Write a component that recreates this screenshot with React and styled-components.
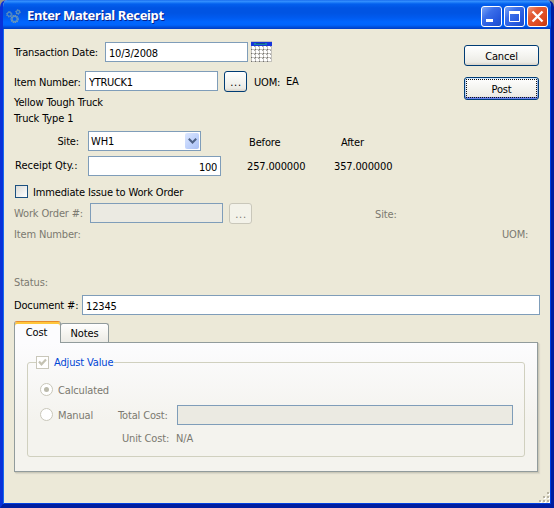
import React from "react";
import styled, { createGlobalStyle, css } from "styled-components";

const GlobalStyle = createGlobalStyle`
  * { box-sizing: border-box; }
  body { margin: 0; background: #9a9687; }
  button, input { font: inherit; letter-spacing: inherit; }
`;

const Window = styled.div`
  width: 554px;
  height: 508px;
  display: flex;
  flex-direction: column;
  border: 3px solid;
  border-color: #0054e3 #001ea0 #001ea0 #0831d9;
  border-top: 0;
  border-bottom-width: 4px;
  border-radius: 7px 7px 0 0;
  background: #ece9d8;
  overflow: hidden;
  font: 11px/14px "DejaVu Sans Condensed", "DejaVu Sans", sans-serif;
  letter-spacing: -0.15px;
  color: #000;
  white-space: nowrap;
`;

const TitleBar = styled.header`
  height: 29px;
  margin: 0 -3px;
  padding: 3px 6px 0 6px;
  flex: none;
  display: flex;
  align-items: center;
  background: linear-gradient(#0b5fe8 0, #3a93ff 1px, #2686fb 2px, #0360ee 4px, #0054e3 8px, #0054e3 13px, #005bf0 18px, #0066ff 22px, #0064fc 25px, #0050dc 27px, #003dc4 29px);
`;

const Title = styled.h1`
  flex: 1;
  margin: 0 0 2px 6px;
  font: bold 13px/18px "Noto Sans", sans-serif;
  letter-spacing: -0.38px;
  color: #fff;
  text-shadow: 1px 1px #06218c;
`;

const Controls = styled.div`
  display: flex;
  gap: 2px;
`;

const Control = styled.button`
  width: 21px;
  height: 21px;
  padding: 0;
  display: grid;
  place-items: center;
  border: 1px solid #fff;
  border-radius: 3px;
  background: ${(p) =>
    p.$close
      ? "linear-gradient(135deg, #f09a80 0, #e35c36 30%, #dd4a20 70%, #bf3510 100%)"
      : "linear-gradient(135deg, #7ba5f7 0, #3a6ee9 35%, #2659df 70%, #1c4cc8 100%)"};
`;

const Client = styled.main`
  flex: 1;
  padding: 13px 11px 0 11px;
  display: flex;
  flex-direction: column;
  box-shadow: inset 1px 0 #166aee, inset -1px 0 #0040e0, inset 0 -1px #0040e0;
`;

const Upper = styled.section`
  display: flex;
  justify-content: space-between;
  height: 141px;
  flex: none;
`;

const Actions = styled.div`
  display: flex;
  flex-direction: column;
  gap: 11px;
  padding-top: 3px;
  margin-right: 1px;
`;

const Row = styled.div`
  display: flex;
  flex: none;
  align-items: center;
  height: ${(p) => p.$h || 21}px;
  margin-top: ${(p) => p.$mt || 0}px;
  color: ${(p) => (p.$off ? "#7b7970" : "inherit")};
`;

const Label = styled.span`
  flex: none;
  align-self: flex-start;
  margin-top: ${(p) => (p.$y === undefined ? 4 : p.$y)}px;
  width: ${(p) => (p.$w ? p.$w + "px" : "auto")};
  margin-left: ${(p) => p.$ml || 0}px;
  letter-spacing: ${(p) => (p.$ls === undefined ? -0.15 : p.$ls)}px;
  text-align: ${(p) => (p.$end ? "right" : "left")};
`;

const Field = styled.input`
  width: ${(p) => p.$w}px;
  height: 20px;
  flex: none;
  margin: 0 0 1px;
  padding: 2px 3px 0 3px;
  border: 1px solid #7f9db9;
  border-radius: 0;
  background: #fff;
  color: #000;
  letter-spacing: ${(p) => (p.$ls === undefined ? -0.15 : p.$ls)}px;
  text-align: ${(p) => (p.$end ? "right" : "left")};
  outline: none;
  &:disabled { background: #ebeae2; }
`;

const PushButton = styled.button`
  width: ${(p) => p.$w}px;
  height: ${(p) => p.$h || 21}px;
  flex: none;
  margin: 0 0 0 ${(p) => p.$ml || 0}px;
  padding: ${(p) => (p.$default ? 0 : 2)}px 0 0;
  border: 1px solid #003c74;
  border-radius: 3px;
  background: linear-gradient(#fff, #f4f4f0 50%, #ecebe5 85%, #d9d3c8);
  color: #000;
  &:disabled { border-color: #c9c7ba; background: #f3f2e9; color: #7b7970; }
  ${(p) =>
    p.$default &&
    css`
      box-shadow: inset 0 1px #cee7ff, inset 0 -2px #6982ee, inset 1px 0 #bcd4f6, inset -1px 0 #98b4e8;
    `}
`;

const Focus = styled.span`
  display: block;
  margin: 1px;
  height: 19px;
  border: 1px dotted #111;
  line-height: 19px;
`;

const Dots = styled.span`
  display: block;
  padding-left: 1px;
  letter-spacing: 0.7px;
`;

const CalendarButton = styled.span`
  display: block;
  height: 21px;
  margin: -2px 0 0 3px;
`;

const Select = styled.div`
  width: 113px;
  height: 20px;
  margin-bottom: 1px;
  padding: 1px 1px 1px 2px;
  display: flex;
  justify-content: space-between;
  border: 1px solid #7f9db9;
  background: #fff;
  line-height: 18px;
`;

const Arrow = styled.span`
  width: 14px;
  height: 16px;
  display: grid;
  place-items: center;
  border-radius: 2px;
  background: linear-gradient(135deg, #dce7ff, #bdd0fb 60%, #a9bff4);
`;

const Check = styled.span`
  width: 13px;
  height: 13px;
  flex: none;
  display: grid;
  place-items: center;
  margin-left: ${(p) => p.$ml || 0}px;
  border: 1px solid ${(p) => (p.$off ? "#c9c7ba" : "#1c5180")};
  background: ${(p) => (p.$off ? "#fff" : "linear-gradient(135deg, #dcdcd7, #fff)")};
`;

const Radio = styled(Check)`
  margin-bottom: ${(p) => (p.$on ? 0 : 2)}px;
  border-radius: 50%;
  &::after {
    content: "";
    width: 5px;
    height: 5px;
    border-radius: 50%;
    background: ${(p) => (p.$on ? "#bbbaab" : "transparent")};
  }
`;

const Tabs = styled.nav`
  display: flex;
  align-items: flex-end;
  height: 21px;
  margin-top: 5px;
  flex: none;
`;

const Tab = styled.div`
  width: 49px;
  height: 19px;
  margin-left: -1px;
  padding-top: 3px;
  border: 1px solid #919b9c;
  border-bottom: 0;
  border-radius: 3px 3px 0 0;
  text-align: center;
  background: linear-gradient(#fff, #f4f3ee 60%, #ecebe6);
  ${(p) =>
    p.$active &&
    css`
      position: relative;
      z-index: 1;
      width: 47px;
      height: 22px;
      margin: 0 0 -1px;
      padding: 4px 2px 0 0;
      border-top-color: #e68b2c;
      box-shadow: inset 0 2px #ffc73c;
      background: #fcfcfe;
    `}
`;

const Pane = styled.section`
  width: 524px;
  height: 130px;
  flex: none;
  padding: 13px 12px 0 12px;
  border: 1px solid #919b9c;
  background: linear-gradient(#fcfcfe, #f4f3ee 60%);
  box-shadow: 1px 1px 1px #cbc8b8, 2px 2px 1px #deddcf;
`;

const Group = styled.fieldset`
  width: 498px;
  height: 101px;
  margin: 0;
  padding: 0 0 0 12px;
  border: 1px solid #d0d0bf;
  border-radius: 3px;
  color: #7b7970;
`;

const Legend = styled.legend`
  display: flex;
  align-items: center;
  height: 13px;
  margin-left: -4px;
  padding: 0 1px 0 0;
  color: #0046d5;
`;

const Grip = styled.svg`
  display: block;
  align-self: flex-end;
  margin: auto -10px 1px 0;
`;

const Logo = () => (
  <svg width="15" height="15" viewBox="0 0 15 15" fill="none">
    <g stroke="#7f9fae" strokeDasharray="1.3 .7">
      <circle cx="3.3" cy="5.3" r="2.6" />
      <circle cx="8.6" cy="10" r="3.500" strokeWidth="1.3" />
      <circle cx="12" cy="3" r="2.200" />
    </g>
    <g stroke="#5f93bd">
      <circle cx="3.3" cy="5.3" r="1.9" />
      <circle cx="8.6" cy="10" r="2.6" strokeWidth="1.3" />
      <circle cx="12" cy="3" r="1.5" />
    </g>
  </svg>
);

const Calendar = () => (
  <svg width="21" height="21" viewBox="0 0 21 21" shapeRendering="crispEdges">
    <rect width="21" height="21" fill="#c4c2bc" />
    <rect y="1" width="21" height="4" fill="#1635dc" />
    <rect x="3" y="2" width="13" height="2" fill="#1782a8" />
    <rect x="5" y="2" width="9" height="1" fill="#144b91" />
    {[5, 9, 13, 17].map((y) =>
      [1, 5, 9, 13, 17].map((x) => (
        <g key={`${x}-${y}`}>
          <rect x={x} y={y} width="3" height="3" fill="#fff" />
          <rect x={x - 1} y={y + 3} width="1" height="1" fill="#6f6f6f" />
          <rect x={x + 2} y={y} width="1" height="1" fill="#a5a5a5" />
        </g>
      ))
    )}
  </svg>
);

export default function App() {
  return (
    <>
      <GlobalStyle />
      <Window>
        <TitleBar>
          <Logo />
          <Title>Enter Material Receipt</Title>
          <Controls>
            <Control aria-label="Minimize">
              <svg width="19" height="19"><rect x="4" y="12" width="7" height="3" fill="#fff" /></svg>
            </Control>
            <Control aria-label="Maximize">
              <svg width="19" height="19"><path d="M4.5 5v9.500h10V5" stroke="#fff" fill="none" /><rect x="4" y="4" width="11" height="3" fill="#fff" /></svg>
            </Control>
            <Control $close aria-label="Close">
              <svg width="19" height="19"><path d="M4.500 4.500l10 10M14.500 4.500l-10 10" stroke="#fff" strokeWidth="2.3" /></svg>
            </Control>
          </Controls>
        </TitleBar>
        <Client>
          <Upper>
            <div>
              <Row>
                <Label $w={91}>Transaction Date:</Label>
                <Field $w={143} defaultValue="10/3/2008" $ls={-0.2} />
                <CalendarButton><Calendar /></CalendarButton>
              </Row>
              <Row $mt={8}>
                <Label $y={5} $w={71}>Item Number:</Label>
                <Field $w={133} defaultValue="YTRUCK1" $ls={-0.3} />
                <PushButton $w={23} $ml={6}><Dots>...</Dots></PushButton>
                <Label $y={5} $ml={7} $w={32}>UOM:</Label>
                <Label>EA</Label>
              </Row>
              <Row $h={16} $mt={3}><Label $y={1}>Yellow Tough Truck</Label></Row>
              <Row $h={16}><Label $y={1}>Truck Type 1</Label></Row>
              <Row $mt={4}>
                <Label $w={65} $end>Site:</Label>
                <Label $w={9} />
                <Select>WH1<Arrow><svg width="9" height="6"><path d="M.8 .8l3.700 3.700L8.200 .8" fill="none" stroke="#4d6185" strokeWidth="2" /></svg></Arrow></Select>
                <Label $y={5} $ml={48} $w={92}>Before</Label>
                <Label $y={5}>After</Label>
              </Row>
              <Row $mt={4}>
                <Label $y={3} $ml={1} $w={73} $ls={0}>Receipt Qty.:</Label>
                <Field $w={133} $end defaultValue="100" $ls={-0.3} />
                <Label $ml={26} $w={87}>257.000000</Label>
                <Label>357.000000</Label>
              </Row>
            </div>
            <Actions>
              <PushButton $w={75}>Cancel</PushButton>
              <PushButton $w={75} $h={23} $default><Focus>Post</Focus></PushButton>
            </Actions>
          </Upper>
          <Row $h={15} $mt={1}>
            <Check $ml={1} /><Label $y={2} $ml={5}>Immediate Issue to Work Order</Label>
          </Row>
          <Row $mt={4} $off>
            <Label $w={76}>Work Order #:</Label>
            <Field $w={133} disabled />
            <PushButton $w={23} $ml={6} disabled><Dots>...</Dots></PushButton>
            <Label $y={5} $ml={123}>Site:</Label>
          </Row>
          <Row $h={20} $off>
            <Label $w={488}>Item Number:</Label>
            <Label>UOM:</Label>
          </Row>
          <Row $h={16} $mt={30} $off><Label $y={2}>Status:</Label></Row>
          <Row $mt={5}>
            <Label $w={68}>Document #:</Label>
            <Field $w={458} defaultValue="12345" />
          </Row>
          <Tabs><Tab $active>Cost</Tab><Tab>Notes</Tab></Tabs>
          <Pane>
            <Group>
              <Legend>
                <Check $off><svg width="9" height="9"><path d="M1 3.500l2.500 2.800L8 1.500" stroke="#c4c2b2" strokeWidth="2.200" fill="none" /></svg></Check>
                <Label $y={0} $ml={5}>Adjust Value</Label>
              </Legend>
              <Row $mt={10}><Radio $off $on /><Label $y={5} $ml={5}>Calculated</Label></Row>
              <Row $mt={5}>
                <Radio $off /><Label $ml={5} $w={60}>Manual</Label>
                <Label $w={59}>Total Cost:</Label>
                <Field $w={336} disabled />
              </Row>
              <Row $h={20} $mt={2}><Label $ml={82} $w={54}>Unit Cost:</Label><Label>N/A</Label></Row>
            </Group>
          </Pane>
          <Grip width="11" height="11">
            {[[8, 0], [4, 4], [8, 4], [0, 8], [4, 8], [8, 8]].map(([x, y]) => (
              <g key={`${x}-${y}`}>
                <rect x={x + 1} y={y + 1} width="2" height="2" fill="#fff" />
                <rect x={x} y={y} width="2" height="2" fill="#b8b4a2" />
              </g>
            ))}
          </Grip>
        </Client>
      </Window>
    </>
  );
}
